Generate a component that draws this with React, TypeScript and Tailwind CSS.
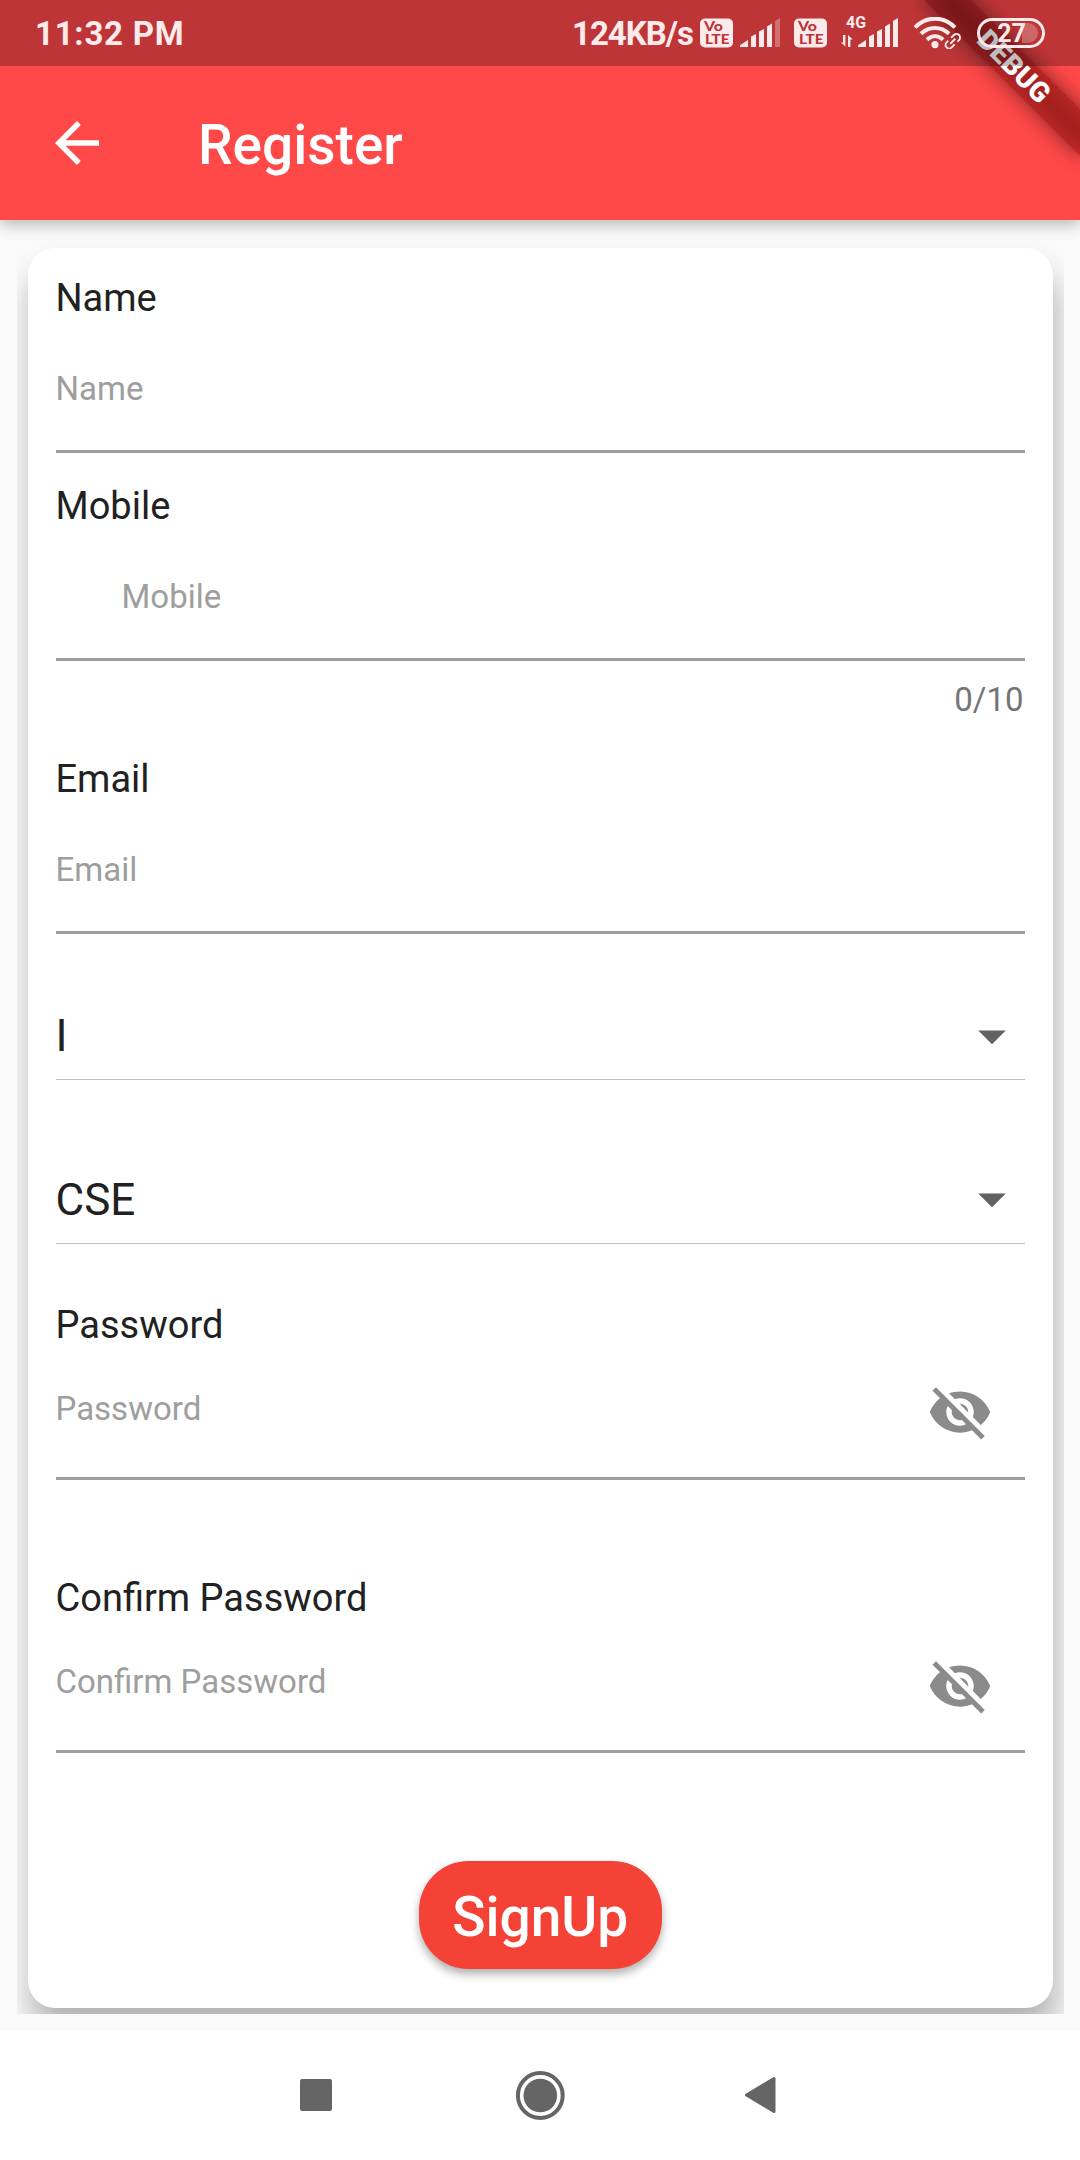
import React from "react";

function VoLte({ className = "" }: { className?: string }) {
  return (
    <svg className={className} width="33" height="30" viewBox="0 0 33 30">
      <rect x="0" y="0.5" width="33" height="29" rx="5" fill="#fdeaea" />
      <g fill="#bd3337" fontFamily="Lato, sans-serif" fontWeight="900">
        <text x="4" y="13.3" fontSize="13.5" textLength="19" lengthAdjust="spacingAndGlyphs">Vo</text>
        <text x="5" y="26" fontSize="13.5" textLength="24.5" lengthAdjust="spacingAndGlyphs">LTE</text>
      </g>
    </svg>
  );
}

function Signal({ full = false }: { full?: boolean }) {
  return (
    <svg width="41" height="30" viewBox="0 0 41 30" fill="#fdeaea">
      <path d="M0 29 V27.2 L8 22 V29 Z" />
      <path d="M11 29 V18.6 L16 16 V29 Z" />
      <path d="M19 29 V13.6 L24 11 V29 Z" />
      <path d="M27 29 V8.4 L32 5.5 V29 Z" />
      <path d="M35 29 V3 L40 0 V29 Z" opacity={full ? 1 : 0.32} />
    </svg>
  );
}

function StatusBar() {
  return (
    <div className="relative z-20 flex h-[66px] items-start bg-[rgba(2,0,8,0.26)] text-[#fdeaea]">
      <div className="ml-[35px] mt-[14px] w-[150px] whitespace-nowrap text-[33px] font-bold leading-[40px] tracking-[0.75px]">
        11:32 PM
      </div>
      <div className="ml-[387px] mt-[14px] w-[128px] whitespace-nowrap text-[33px] font-bold leading-[40px] tracking-[-1px]">
        124KB/s
      </div>
      <VoLte className="mt-[18px]" />
      <div className="ml-[7px] mt-[18px]">
        <Signal />
      </div>
      <VoLte className="ml-[13px] mt-[18px]" />
      <div className="ml-[13px] mt-[16px] flex w-[18px] flex-col">
        <span className="ml-[6px] text-[16px] font-bold leading-[14px]">4G</span>
        <svg className="mt-[4px]" width="14" height="14" viewBox="0 0 14 14" fill="#fdeaea">
          <path d="M3 1 H5.4 V12.5 L1 8.5 H3 Z" />
          <path d="M10.4 13 H8 V1 L12.8 5.5 H10.4 Z" />
        </svg>
      </div>
      <div className="mt-[18px]">
        <Signal full />
      </div>
      <svg className="ml-[14px] mt-[17px]" width="50" height="32" viewBox="0 0 50 32" fill="none" stroke="#fdeaea">
        <path d="M2 10.5 C13 -1.2 31 -1.2 42 10.5" strokeWidth="4" />
        <path d="M8 16.8 C16 9 28 9 36 16.8" strokeWidth="4" />
        <path d="M14 22.8 C19 18 25 18 30 22.8" strokeWidth="4" />
        <circle cx="22" cy="27.6" r="3.6" fill="#fdeaea" stroke="none" />
        <g transform="translate(39.8 24.2) rotate(-45)" strokeWidth="1.9">
          <path d="M1 -3.6 H5.2 A3.6 3.6 0 0 1 5.2 3.6 H3" />
          <path d="M-1 3.6 H-5.2 A3.6 3.6 0 0 1 -5.2 -3.6 H-3" />
          <path d="M-3.6 0 H3.6" />
        </g>
      </svg>
      <svg className="ml-[13px] mt-[17px]" width="70" height="32" viewBox="0 0 70 32">
        <path d="M46 6 H52 A10 10 0 0 1 52 26 H46 Z" fill="#fdeaea" opacity="0.28" />
        <rect x="2.5" y="2.5" width="65" height="27" rx="13.5" fill="none" stroke="#fdeaea" strokeWidth="3" />
        <text x="35.5" y="25" textAnchor="middle" fontFamily="Roboto, sans-serif" fontSize="25" fontWeight="700" fill="#fdeaea">
          27
        </text>
      </svg>
    </div>
  );
}

function DebugBanner() {
  return (
    <div className="absolute left-[904px] top-[49.5px] z-10 h-[33px] w-[220px] rotate-45">
      <div className="absolute inset-0 bg-black/50 blur-[9.5px]" />
      <div className="absolute inset-0 bg-[rgba(183,28,28,0.627)]" />
      <div className="relative text-center text-[28px] font-black leading-[33px] text-white">DEBUG</div>
    </div>
  );
}

type FieldProps = {
  label: string;
  hint: string;
  className?: string;
  hintClass?: string;
  eyeClass?: string;
};

function Field({ label, hint, className = "", hintClass = "mt-[48px]", eyeClass }: FieldProps) {
  return (
    <div className={`relative h-[178px] border-b-3 border-[#9e9e9e] ${className}`}>
      <div className="text-[38px] leading-[46px] text-[#212121]">{label}</div>
      <div className={`text-[33px] leading-[40px] text-[#9e9e9e] ${hintClass}`}>{hint}</div>
      {eyeClass && (
        <svg className={`absolute right-[32px] ${eyeClass}`} width="66" height="66" viewBox="0 0 24 24" fill="#8b8b8b">
          <path d="M12 7c2.76 0 5 2.24 5 5 0 .65-.13 1.26-.36 1.83l2.92 2.92c1.51-1.26 2.7-2.89 3.43-4.75-1.73-4.39-6-7.5-11-7.5-1.4 0-2.74.25-3.98.7l2.16 2.16C10.74 7.13 11.35 7 12 7zM2 4.27l2.28 2.28.46.46C3.08 8.3 1.78 10.02 1 12c1.73 4.39 6 7.5 11 7.5 1.55 0 3.03-.3 4.38-.84l.42.42L19.73 22 21 20.73 3.27 3 2 4.27zM7.53 9.8l1.55 1.55c-.05.21-.08.43-.08.65 0 1.66 1.34 3 3 3 .22 0 .44-.03.65-.08l1.55 1.55c-.67.33-1.41.53-2.2.53-2.76 0-5-2.24-5-5 0-.79.2-1.53.53-2.2zm4.31-.78l3.15 3.15.02-.16c0-1.66-1.34-3-3-3l-.17.01z" />
        </svg>
      )}
    </div>
  );
}

function Dropdown({ value, className = "", textClass = "" }: { value: string; className?: string; textClass?: string }) {
  return (
    <div className={`border-b border-[#bfbfbf] ${className}`}>
      <div className="flex h-[66px] items-center justify-between">
        <span className={`text-[44px] leading-[52px] text-[#212121] ${textClass}`}>{value}</span>
        <svg width="66" height="66" viewBox="0 0 24 24" fill="#616161">
          <path d="M7 10l5 5 5-5z" />
        </svg>
      </div>
    </div>
  );
}

export default function App() {
  return (
    <div className="flex h-[2160px] w-[1080px] flex-col overflow-hidden bg-[#fafafa] font-['Roboto',sans-serif]">
      <header className="relative z-10 h-[220px] shrink-0 bg-[#ff4848] shadow-[0_5px_14px_rgba(0,0,0,0.26)]">
        <div className="absolute inset-0 overflow-hidden">
          <DebugBanner />
        </div>
        <StatusBar />
        <div className="flex h-[154px] items-center pl-[44px]">
          <svg width="66" height="66" viewBox="0 0 24 24" fill="#fff">
            <path d="M20 11H7.83l5.59-5.59L12 4l-8 8 8 8 1.41-1.41L7.83 13H20v-2z" />
          </svg>
          <h1 className="ml-[88px] pt-[4px] text-[55px] font-medium leading-[64px] text-white">Register</h1>
        </div>
      </header>

      <main className="mx-[16.5px] mt-[16.5px] h-[1777px] shrink-0 overflow-hidden px-[11px] pt-[11px]">
        <div className="flex h-[1760.5px] flex-col rounded-[27.5px] bg-white pl-[28px] pr-[27.5px] pt-[27px] shadow-[3px_24px_32px_rgba(0,0,0,0.29)]">
          <Field label="Name" hint="Name" />
          <Field label="Mobile" hint="Mobile" className="mt-[30px]" hintClass="mt-[48px] pl-[66px]" />
          <div className="mt-[19px] pr-[1.5px] text-right text-[33px] leading-[40px] text-[#757575]">0/10</div>
          <Field label="Email" hint="Email" className="mt-[36px]" />
          <Dropdown value="I" className="mt-[69px] pb-[10px]" textClass="pt-[1px]" />
          <Dropdown value="CSE" className="mt-[86px] pb-[11px]" textClass="pt-[3px]" />
          <Field label="Password" hint="Password" className="mt-[58px]" hintClass="mt-[41px]" eyeClass="top-[77px]" />
          <Field label="Confirm Password" hint="Confirm Password" className="mt-[95px]" hintClass="mt-[41px]" eyeClass="top-[78px]" />
          <button className="mt-[108px] h-[108px] w-[242.5px] self-center rounded-[49.5px] bg-[#f44336] pt-[5px] text-[55px] font-medium leading-[64px] text-white shadow-[0_5px_10px_rgba(0,0,0,0.32)]">
            SignUp
          </button>
        </div>
      </main>

      <nav className="mt-auto flex h-[130px] shrink-0 items-center bg-white pl-[300px]">
        <div className="size-[32px] rounded-[2px] bg-[#656565]" />
        <svg className="ml-[183px]" width="50" height="50" viewBox="0 0 50 50">
          <circle cx="25.3" cy="25.5" r="22.4" fill="none" stroke="#656565" strokeWidth="4" />
          <circle cx="25.3" cy="25.5" r="16.8" fill="#656565" />
        </svg>
        <svg className="ml-[179px]" width="32" height="38" viewBox="0 0 32 38">
          <path d="M2.5 19 L30 2.5 V35.5 Z" fill="#656565" stroke="#656565" strokeWidth="3" strokeLinejoin="round" />
        </svg>
      </nav>
    </div>
  );
}
